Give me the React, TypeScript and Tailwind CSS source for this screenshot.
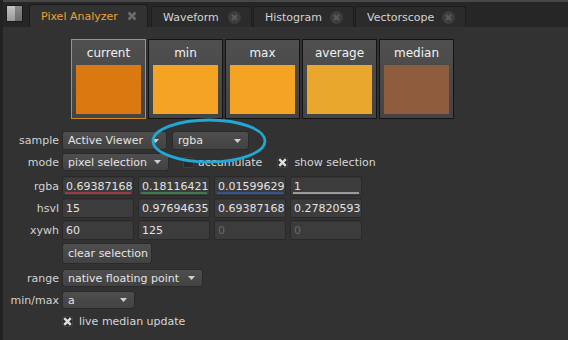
import React from "react";

const FONT = { fontFamily: '"DejaVu Sans", "Liberation Sans", sans-serif' };

const SWATCHES = [
  { label: "current", color: "bg-[#d9790f]", selected: true },
  { label: "min", color: "bg-[#f5a322]", selected: false },
  { label: "max", color: "bg-[#f5a322]", selected: false },
  { label: "average", color: "bg-[#e9a72e]", selected: false },
  { label: "median", color: "bg-[#8e5d3d]", selected: false },
];

function Arrow() {
  return (
    <svg width="7" height="4" viewBox="0 0 7 4" className="shrink-0">
      <path d="M0 0 L7 0 L3.5 4 Z" fill="#d0d0d0" />
    </svg>
  );
}

function Dropdown({ value, w }: { value: string; w: string }) {
  return (
    <div
      className={`${w} h-full flex items-center justify-between pl-[5px] pr-[7px] rounded-[3px] border border-[#2a2a2a] bg-gradient-to-b from-[#4e4e4e] to-[#424242] text-[#e4e4e4]`}
    >
      <span>{value}</span>
      <Arrow />
    </div>
  );
}

function Field({ value, dim, line }: { value: string; dim?: boolean; line?: string }) {
  return (
    <div className="relative w-[72px] h-full flex items-center pl-[3px] rounded-[2px] border border-[#292929] bg-[#3c3c3c] shadow-[inset_0_1px_0_#353535]">
      <span className={dim ? "text-[#6a6a6a]" : "text-[#e2e2e2]"}>{value}</span>
      {line && <div className={`absolute left-[2px] right-[2px] bottom-[1px] h-[2px] ${line}`} />}
    </div>
  );
}

function Check({ checked }: { checked: boolean }) {
  return (
    <div className="w-[11px] h-[11px] flex items-center justify-center rounded-[1px] bg-[#2a2a2a] border border-[#404040]">
      {checked && (
        <svg width="11" height="11" viewBox="0 0 11 11">
          <path d="M1.5 1.5 L9.5 9.5 M9.5 1.5 L1.5 9.5" stroke="#dedede" strokeWidth="3" />
        </svg>
      )}
    </div>
  );
}

function Row({ label, children, className }: { label: string; children?: React.ReactNode; className: string }) {
  return (
    <div className={`flex items-center ${className}`}>
      <div className="w-[56px] text-right text-[#d2d2d2]">{label}</div>
      <div className="ml-[3px] h-full flex items-center gap-[4px]">{children}</div>
    </div>
  );
}

function Tab({ label, w, active, ml }: { label: string; w: string; active?: boolean; ml: string }) {
  return (
    <div
      className={`${w} ${ml} flex items-center justify-between pl-[11px] pr-[10px] border border-b-0 rounded-t-[3px] ${
        active
          ? "h-[23px] bg-[#323232] border-[#1c1c1c] text-[#e9a232]"
          : "h-[21px] bg-[#2b2b2b] border-[#1d1d1d] text-[#d4d4d4]"
      }`}
    >
      <span>{label}</span>
      {active ? (
        <svg width="10" height="10" viewBox="0 0 10 10">
          <path d="M1.5 1.5 L8.5 8.5 M8.5 1.5 L1.5 8.5" stroke="#6c6c6c" strokeWidth="2.6" />
        </svg>
      ) : (
        <div className="w-[13px] h-[13px] rounded-full bg-[#3d3d3d] flex items-center justify-center">
          <svg width="7" height="7" viewBox="0 0 7 7">
            <path d="M1 1 L6 6 M6 1 L1 6" stroke="#5c5c5c" strokeWidth="1.8" />
          </svg>
        </div>
      )}
    </div>
  );
}

export default function App() {
  return (
    <div style={FONT} className="relative w-[568px] h-[340px] overflow-hidden bg-[#323232] border-l-[3px] border-[#222222] text-[11px] leading-none">
      {/* Tab bar */}
      <div className="h-[27px] flex items-end bg-[#262626] border-t-2 border-[#474747]">
        <div className="self-start mt-[3px] ml-[3px] w-[17px] h-[17px] flex border border-[#1a1a1a]">
          <div className="w-[8px] h-full bg-gradient-to-b from-[#c4c4c4] to-[#9a9a9a]" />
          <div className="flex-1 h-full bg-gradient-to-b from-[#8a8a8a] to-[#6a6a6a]" />
        </div>
        <Tab label="Pixel Analyzer" w="w-[119px]" ml="ml-[6px]" active />
        <Tab label="Waveform" w="w-[101px]" ml="ml-[3px]" />
        <Tab label="Histogram" w="w-[101px]" ml="ml-[1px]" />
        <Tab label="Vectorscope" w="w-[111px]" ml="ml-[1px]" />
      </div>

      {/* Swatches */}
      <div className="mt-[12px] ml-[68px] flex gap-[2px]">
        {SWATCHES.map((s) => (
          <div
            key={s.label}
            className={`w-[75px] h-[80px] flex flex-col border bg-gradient-to-b from-[#4f4f4f] to-[#444444] ${
              s.selected ? "border-[#c98a2e]" : "border-[#141414]"
            }`}
          >
            <div className="h-[25px] flex items-center justify-center text-[12px] text-[#f2f2f2]">{s.label}</div>
            <div className={`mx-[4px] h-[49px] ${s.color}`} />
          </div>
        ))}
      </div>

      {/* Controls */}
      <Row label="sample" className="mt-[12px] h-[19px]">
        <Dropdown value="Active Viewer" w="w-[105px]" />
        <div className="ml-[1px] h-full">
          <Dropdown value="rgba" w="w-[77px]" />
        </div>
      </Row>
      <Row label="mode" className="mt-[3px] h-[18px]">
        <Dropdown value="pixel selection" w="w-[107px]" />
        <div className="ml-[10px]">
          <Check checked={false} />
        </div>
        <span className="text-[#d6d6d6]">accumulate</span>
        <div className="ml-[11px]">
          <Check checked />
        </div>
        <span className="ml-[2px] text-[#d6d6d6]">show selection</span>
      </Row>
      <Row label="rgba" className="mt-[5px] h-[20px]">
        <Field value="0.69387168" line="bg-[#9a3a44]" />
        <Field value="0.18116421" line="bg-[#3f7a4a]" />
        <Field value="0.01599629" line="bg-[#35548e]" />
        <Field value="1" line="bg-[#9a9a9a]" />
      </Row>
      <Row label="hsvl" className="mt-[2px] h-[20px]">
        <Field value="15" />
        <Field value="0.97694635" />
        <Field value="0.69387168" />
        <Field value="0.27820593" />
      </Row>
      <Row label="xywh" className="mt-[2px] h-[20px]">
        <Field value="60" />
        <Field value="125" />
        <Field value="0" dim />
        <Field value="0" dim />
      </Row>
      <Row label="" className="mt-[3px] h-[21px]">
        <div className="w-[90px] h-full flex items-center pl-[5px] rounded-[3px] border border-[#2a2a2a] bg-gradient-to-b from-[#4e4e4e] to-[#424242] text-[#e4e4e4]">
          clear selection
        </div>
      </Row>
      <Row label="range" className="mt-[5px] h-[18px]">
        <Dropdown value="native floating point" w="w-[141px]" />
      </Row>
      <Row label="min/max" className="mt-[4px] h-[18px]">
        <Dropdown value="a" w="w-[73px]" />
      </Row>
      <Row label="" className="mt-[7px] h-[10px]">
        <Check checked />
        <span className="ml-[2px] text-[#d6d6d6]">live median update</span>
      </Row>

      {/* Annotation ellipse */}
      <svg className="absolute left-[147px] top-[118px]" width="118" height="46" viewBox="0 0 118 46">
        <ellipse cx="59" cy="23" rx="56" ry="21" fill="none" stroke="#22a8d4" strokeWidth="2.8" />
      </svg>
    </div>
  );
}
